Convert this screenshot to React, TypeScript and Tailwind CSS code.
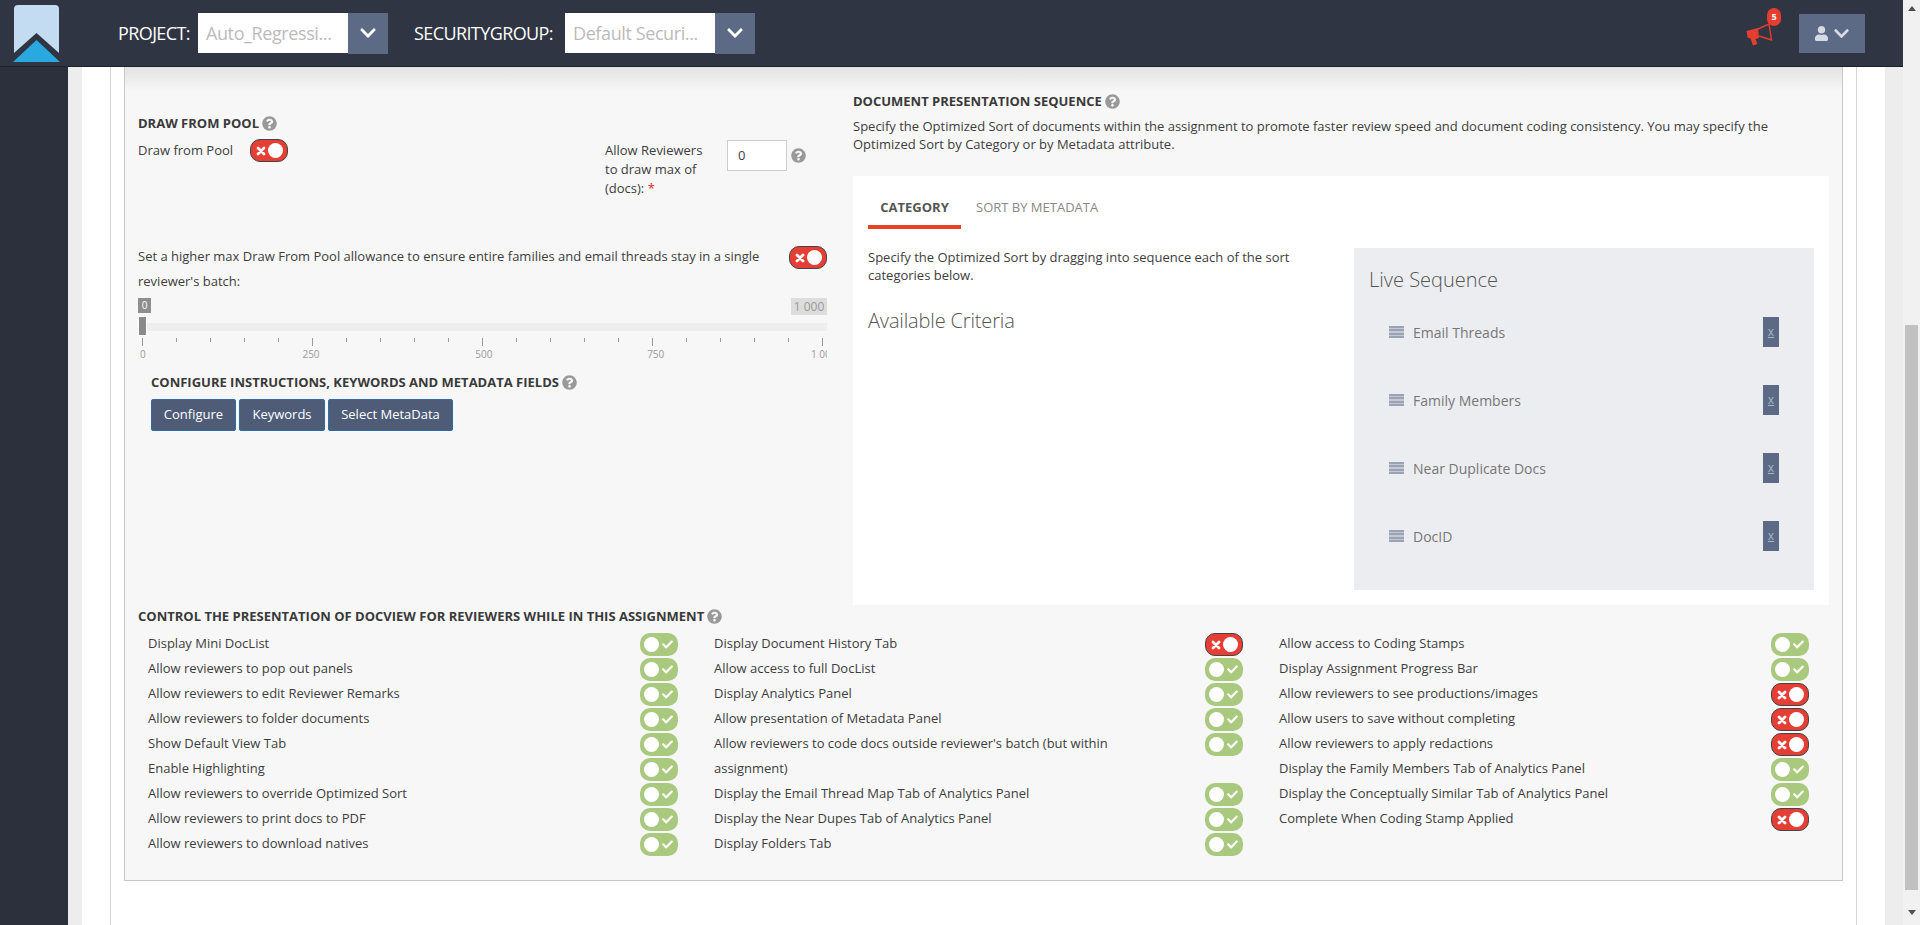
import React from "react";
import { FaQuestionCircle, FaCheck, FaChevronDown, FaUser } from "react-icons/fa";

function Toggle({ on }: { on: boolean }) {
  return on ? (
    <div className="w-[38px] h-[23px] shrink-0 rounded-[10px] bg-[#a9c97f] flex items-center justify-between px-[4px]">
      <span className="w-[15px] h-[15px] rounded-full bg-white" />
      <FaCheck className="text-white mr-[1px]" size={11} />
    </div>
  ) : (
    <div className="w-[38px] h-[23px] shrink-0 rounded-[10px] bg-[#e53e35] border border-[#444] flex items-center justify-between px-[4px]">
      <svg className="ml-[1px]" width="10" height="10" viewBox="0 0 10 10">
        <path d="M2 2L8 8M8 2L2 8" stroke="#fff" strokeWidth="2.8" strokeLinecap="round" />
      </svg>
      <span className="w-[15px] h-[15px] rounded-full bg-white" />
    </div>
  );
}

function Help({ className = "" }: { className?: string }) {
  return <FaQuestionCircle className={"text-[#999] shrink-0 " + className} size={15} />;
}

function Heading({ children }: { children: React.ReactNode }) {
  return (
    <div className="flex items-center gap-[3px] text-[13px] leading-[19px] font-bold text-[#3a3a3a]">
      <span>{children}</span>
      <Help />
    </div>
  );
}

function HeaderSelect({ label, value, labelW }: { label: string; value: string; labelW: string }) {
  return (
    <div className="flex items-center">
      <span className={"text-[18px] text-white tracking-[-0.6px] whitespace-nowrap " + labelW}>{label}</span>
      <div className="w-[150px] h-[40px] bg-white text-[#bbb] text-[18px] tracking-[-0.4px] flex items-center pl-[8px] whitespace-nowrap">{value}</div>
      <div className="w-[40px] h-[41px] bg-[#5c6a85] flex items-center justify-center">
        <FaChevronDown className="text-white" size={18} />
      </div>
    </div>
  );
}

const seq = ["Email Threads", "Family Members", "Near Duplicate Docs", "DocID"];

type Row = { t: string; on?: boolean };

const col1: Row[] = [
  { t: "Display Mini DocList", on: true },
  { t: "Allow reviewers to pop out panels", on: true },
  { t: "Allow reviewers to edit Reviewer Remarks", on: true },
  { t: "Allow reviewers to folder documents", on: true },
  { t: "Show Default View Tab", on: true },
  { t: "Enable Highlighting", on: true },
  { t: "Allow reviewers to override Optimized Sort", on: true },
  { t: "Allow reviewers to print docs to PDF", on: true },
  { t: "Allow reviewers to download natives", on: true },
];
const col2: Row[] = [
  { t: "Display Document History Tab", on: false },
  { t: "Allow access to full DocList", on: true },
  { t: "Display Analytics Panel", on: true },
  { t: "Allow presentation of Metadata Panel", on: true },
  { t: "Allow reviewers to code docs outside reviewer's batch (but within assignment)", on: true },
  { t: "Display the Email Thread Map Tab of Analytics Panel", on: true },
  { t: "Display the Near Dupes Tab of Analytics Panel", on: true },
  { t: "Display Folders Tab", on: true },
];
const col3: Row[] = [
  { t: "Allow access to Coding Stamps", on: true },
  { t: "Display Assignment Progress Bar", on: true },
  { t: "Allow reviewers to see productions/images", on: false },
  { t: "Allow users to save without completing", on: false },
  { t: "Allow reviewers to apply redactions", on: false },
  { t: "Display the Family Members Tab of Analytics Panel", on: true },
  { t: "Display the Conceptually Similar Tab of Analytics Panel", on: true },
  { t: "Complete When Coding Stamp Applied", on: false },
];

function Column({ rows, width }: { rows: Row[]; width: string }) {
  return (
    <div className={"flex flex-col " + width}>
      {rows.map((r) => (
        <div key={r.t} className="flex justify-between items-start">
          <div className="w-[440px] text-[13px] leading-[25px] text-[#3d3d3d]">{r.t}</div>
          <div className="pt-[2px]"><Toggle on={!!r.on} /></div>
        </div>
      ))}
    </div>
  );
}

const ticks = Array.from({ length: 21 }, (_, i) => i);

export default function App() {
  return (
    <div className="w-[1920px] h-[925px] overflow-hidden flex flex-col bg-white font-['Open_Sans',sans-serif] text-[#3d3d3d]">
      <header className="h-[67px] shrink-0 bg-[#2f3542] border-b border-[#1d2129] flex items-center relative z-10">
        <svg className="ml-[13px] shrink-0" width="47" height="57" viewBox="0 0 47 57">
          <path d="M5 0H42a4 4 0 0 1 4 4V48L23.5 28 1 48V4a4 4 0 0 1 4-4z" fill="#c3dcf1" />
          <path d="M23.5 35L47 57H0z" fill="#2aa8e0" />
        </svg>
        <div className="ml-[58px]"><HeaderSelect label="PROJECT:" value="Auto_Regressi..." labelW="w-[80px]" /></div>
        <div className="ml-[26px]"><HeaderSelect label="SECURITYGROUP:" value="Default Securi..." labelW="w-[151px]" /></div>
        <div className="ml-auto relative w-[36px] h-[40px] mr-[17px]">
          <svg className="absolute left-0 top-[10px]" width="28" height="24" viewBox="0 0 28 24">
            <path d="M0.5 8L12 5L13 15L9.5 16L11.5 21L7 22.5L4.5 15.5L1.5 14.5Z" fill="#e53e2e" />
            <path d="M12 6L23 1L25.5 17L13 13" fill="none" stroke="#e53e2e" strokeWidth="1.4" />
          </svg>
          <span className="absolute left-[21px] top-[-5px] w-[14px] h-[18px] rounded-full bg-[#e53e2e] text-white text-[9px] font-bold flex items-center justify-center">5</span>
        </div>
        <div className="w-[66px] h-[39px] bg-[#5c6a85] flex items-center justify-center gap-[4px] mr-[55px]">
          <FaUser className="text-[#d5dae5]" size={15} />
          <FaChevronDown className="text-[#d5dae5]" size={17} />
        </div>
      </header>

      <div className="flex-1 flex min-h-0">
        <aside className="w-[68px] shrink-0 bg-[#2b303c]" />
        <div className="w-[14px] shrink-0 bg-[#ededed]" />
        <main className="w-[1803px] shrink-0 flex min-w-0">
          <div className="w-[29px] shrink-0 bg-white border-r border-[#d5d5d5]" />
          <div className="w-[13px] shrink-0 bg-white" />
          <div className="w-[1719px] h-[814px] shrink-0 border-l border-r border-b border-[#c8c8c8] bg-[#f7f7f7] bg-gradient-to-b from-[#e2e2e2] to-[#f7f7f7] bg-[length:100%_24px] bg-no-repeat">
            <div className="flex pl-[13px]">
              <section className="w-[715px] shrink-0 pt-[47px]">
                <Heading>DRAW FROM POOL</Heading>
                <div className="flex mt-[7px] h-[100px]">
                  <div className="w-[112px] text-[13px] leading-[19px] pt-[1px]">Draw from Pool</div>
                  <div className="mt-[-1px]"><Toggle on={false} /></div>
                  <div className="ml-[317px] w-[112px] text-[13px] leading-[19px] pt-[1px]">
                    Allow Reviewers to draw max of (docs): <span className="text-[#e0201c]">*</span>
                  </div>
                  <div className="ml-[10px] w-[60px] h-[31px] border border-[#ccc] bg-white text-[13px] flex items-center pl-[10px]">0</div>
                  <Help className="ml-[4px] mt-[8px]" />
                </div>
                <div className="flex w-[689px] justify-between mt-[4px]">
                  <div className="w-[640px] text-[13px] leading-[25px]">
                    Set a higher max Draw From Pool allowance to ensure entire families and email threads stay in a single reviewer's batch:
                  </div>
                  <div className="pt-[2px]"><Toggle on={false} /></div>
                </div>
                <div className="w-[689px] mt-[4px]">
                  <div className="flex justify-between items-start h-[18px]">
                    <span className="w-[13px] h-[15px] bg-[#8e8e8e] text-white text-[10px] leading-[15px] text-center">0</span>
                    <span className="w-[36px] h-[17px] bg-[#ddd] text-[#999] text-[12px] leading-[17px] text-center">1 000</span>
                  </div>
                  <div className="relative h-[8px] mt-[7px] bg-[#eee]">
                    <div className="absolute left-[0px] top-[-7px] w-[9px] h-[20px] bg-[#8a8a8a] border border-white" />
                  </div>
                  <div className="flex justify-between items-start pl-[4px] pr-[4px] mt-[7px] h-[9px]">
                    {ticks.map((i) => (
                      <span key={i} className={i % 5 === 0 ? "w-px h-[8px] bg-[#999]" : "w-px h-[4px] bg-[#999]"} />
                    ))}
                  </div>
                  <div className="relative h-[14px] overflow-hidden text-[10px] leading-[14px] text-[#999] flex justify-between pl-[2px] pr-0">
                    <span>0</span>
                    <span className="ml-[2px]">250</span>
                    <span className="ml-[1px]">500</span>
                    <span className="mr-[-8px]">750</span>
                    <span className="w-[16px] overflow-hidden whitespace-nowrap">1 000</span>
                  </div>
                </div>
                <div className="ml-[13px] mt-[12px]">
                  <Heading>CONFIGURE INSTRUCTIONS, KEYWORDS AND METADATA FIELDS</Heading>
                  <div className="flex gap-[3px] mt-[7px]">
                    {[["Configure", "w-[85px]"], ["Keywords", "w-[86px]"], ["Select MetaData", "w-[125px]"]].map(([t, w]) => (
                      <button key={t} className={"h-[32px] bg-[#4e5c78] border border-[#2e6da4] rounded-[2px] text-white text-[13px] " + w}>{t}</button>
                    ))}
                  </div>
                </div>
              </section>
              <section className="flex-1 pt-[25px]">
                <Heading>DOCUMENT PRESENTATION SEQUENCE</Heading>
                <p className="text-[13px] leading-[18px] mt-[6px] w-[960px]">
                  Specify the Optimized Sort of documents within the assignment to promote faster review speed and document coding consistency. You may specify the Optimized Sort by Category or by Metadata attribute.
                </p>
                <div className="mt-[23px] w-[976px] h-[429px] bg-white flex flex-col pl-[15px]">
                  <div className="flex h-[53px] items-end">
                    <div className="w-[93px] h-[53px] border-b-4 border-[#e64225] text-[13px] font-bold text-[#555] pt-[22px] text-center">CATEGORY</div>
                    <div className="ml-[15px] h-[53px] text-[13px] text-[#888] pt-[22px]">SORT BY METADATA</div>
                  </div>
                  <div className="flex justify-between flex-1 pb-[15px]">
                    <div className="w-[450px] pt-[19px]">
                      <p className="text-[13px] leading-[18px]">Specify the Optimized Sort by dragging into sequence each of the sort categories below.</p>
                      <h3 className="text-[20px] font-light leading-[30px] mt-[22px] text-[#555] tracking-[-0.15px]">Available Criteria</h3>
                    </div>
                    <div className="w-[460px] mr-[15px] mt-[19px] bg-[#ecedf0] pl-[15px] pt-[17px]">
                      <h3 className="text-[20px] font-light leading-[30px] text-[#555]">Live Sequence</h3>
                      <div className="mt-[22px] flex flex-col gap-[38px]">
                        {seq.map((s) => (
                          <div key={s} className="flex items-center h-[30px] pl-[20px] pr-[35px]">
                            <div className="w-[15px] h-[12px] flex flex-col justify-between shrink-0 bg-[#c4c9d4]">
                              {[0, 1, 2, 3].map((i) => <span key={i} className="h-[2px] bg-[#9aa3b5]" />)}
                            </div>
                            <span className="ml-[9px] text-[14px] text-[#777]">{s}</span>
                            <span className="ml-auto w-[16px] h-[30px] bg-[#5c6a85] text-[#aab4c8] text-[12px] underline flex items-center justify-center">x</span>
                          </div>
                        ))}
                      </div>
                    </div>
                  </div>
                </div>
              </section>
            </div>
            <div className="pl-[13px] mt-[2px]">
              <Heading>CONTROL THE PRESENTATION OF DOCVIEW FOR REVIEWERS WHILE IN THIS ASSIGNMENT</Heading>
              <div className="flex gap-[36px] pl-[10px] mt-[5px]">
                <Column rows={col1} width="w-[530px]" />
                <Column rows={col2} width="w-[529px]" />
                <Column rows={col3} width="w-[530px]" />
              </div>
            </div>
          </div>
          <div className="w-[14px] shrink-0 bg-white border-r border-[#d5d5d5]" />
          <div className="w-[28px] shrink-0 bg-white" />
        </main>
        <div className="w-[18px] shrink-0 bg-[#ededed]" />
      </div>
      <div className="absolute right-0 top-0 w-[17px] h-[925px] bg-[#f1f1f1] flex flex-col items-center z-20">
        <span className="mt-[6px] w-0 h-0 border-x-[4px] border-x-transparent border-b-[5px] border-b-[#505050]" />
        <div className="mt-[314px] w-[13px] h-[565px] bg-[#c1c1c1]" />
        <span className="mt-[20px] w-0 h-0 border-x-[4px] border-x-transparent border-t-[5px] border-t-[#505050]" />
      </div>
    </div>
  );
}
